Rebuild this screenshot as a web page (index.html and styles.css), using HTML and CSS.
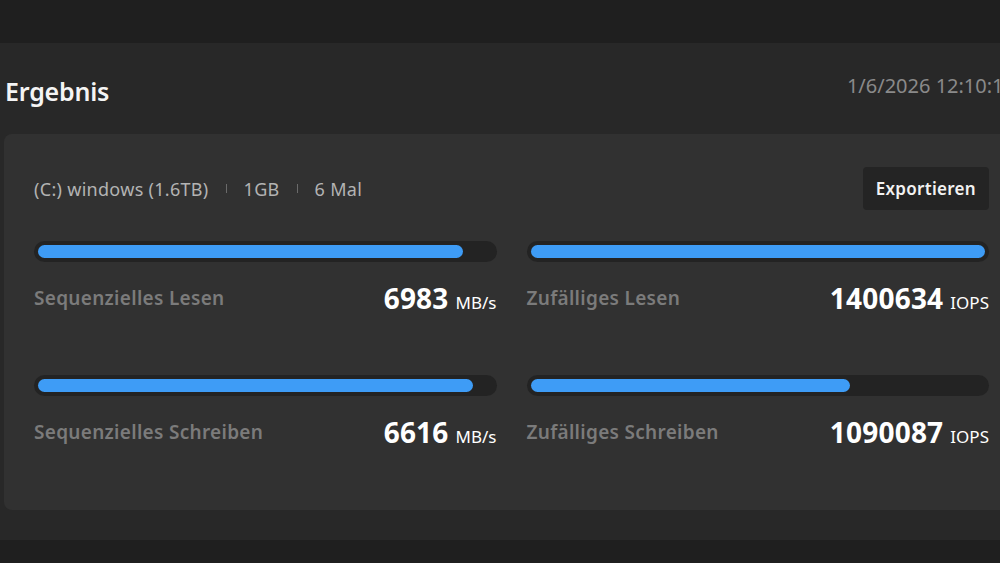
FILE: index.html
```html
<!DOCTYPE html>
<html lang="de">
<head>
<meta charset="utf-8">
<title>Ergebnis</title>
<link rel="stylesheet" href="styles.css">
</head>
<body>
<div class="topbar"></div>
<section class="panel">
  <header class="header">
    <h1 class="title">Ergebnis</h1>
    <div class="date">1/6/2026 12:10:15</div>
  </header>
  <div class="card">
    <div class="card-top">
      <div class="meta">
        <span>(C:) windows (1.6TB)</span>
        <span class="sep"></span>
        <span>1GB</span>
        <span class="sep"></span>
        <span>6 Mal</span>
      </div>
      <button class="export">Exportieren</button>
    </div>
    <div class="grid">
      <div class="item">
        <div class="track"><div class="fill" style="width:93.6%"></div></div>
        <div class="row"><span class="label">Sequenzielles Lesen</span><span class="value">6983<span class="unit">MB/s</span></span></div>
      </div>
      <div class="item">
        <div class="track"><div class="fill" style="width:100%"></div></div>
        <div class="row"><span class="label">Zufälliges Lesen</span><span class="value">1400634<span class="unit">IOPS</span></span></div>
      </div>
      <div class="item">
        <div class="track"><div class="fill" style="width:95.8%"></div></div>
        <div class="row"><span class="label">Sequenzielles Schreiben</span><span class="value">6616<span class="unit">MB/s</span></span></div>
      </div>
      <div class="item">
        <div class="track"><div class="fill" style="width:70.3%"></div></div>
        <div class="row"><span class="label">Zufälliges Schreiben</span><span class="value">1090087<span class="unit">IOPS</span></span></div>
      </div>
    </div>
  </div>
</section>
</body>
</html>
```
FILE: styles.css
```css
html, body {
  margin: 0;
  padding: 0;
}
body {
  width: 1000px;
  height: 563px;
  overflow: hidden;
  background: #1f1f1f;
  font-family: "Noto Sans", "Open Sans", sans-serif;
  color: #fff;
}
.topbar {
  height: 43px;
  background: #1f1f1f;
}
.panel {
  width: 1040px;
  height: 497px;
  background: #282828;
  padding-left: 4px;
  box-sizing: border-box;
}
.header {
  width: 1019px;
  height: 91px;
  display: flex;
  align-items: center;
  justify-content: space-between;
  padding-left: 1px;
  padding-right: 8px;
  box-sizing: border-box;
}
.title {
  margin: 0;
  font-size: 25px;
  font-weight: 600;
  letter-spacing: -0.2px;
  color: #f4f4f4;
  position: relative;
  top: 2px;
}
.date {
  font-size: 20px;
  color: #8a8a8a;
  position: relative;
  top: -3px;
}
.card {
  width: 1019px;
  height: 376px;
  background: #313131;
  border-radius: 8px;
  padding: 33px 34px 0 30px;
  box-sizing: border-box;
}
.card-top {
  display: flex;
  align-items: center;
  justify-content: space-between;
  height: 43px;
}
.meta {
  display: flex;
  align-items: center;
  gap: 17px;
  font-size: 18px;
  letter-spacing: 0.3px;
  color: #b3b3b3;
}
.sep {
  width: 1px;
  height: 9px;
  background: #6a6a6a;
}
.export {
  height: 43px;
  padding: 0 13px;
  background: #242424;
  border: none;
  border-radius: 4px;
  color: #f2f2f2;
  font-family: inherit;
  font-size: 17px;
  font-weight: 600;
  letter-spacing: 0.3px;
}
.grid {
  margin-top: 31px;
  display: grid;
  grid-template-columns: 1fr 1fr;
  column-gap: 30px;
  row-gap: 59px;
}
.track {
  height: 21px;
  background: #232323;
  border-radius: 11px;
  padding: 4px;
  box-sizing: border-box;
}
.fill {
  height: 13px;
  background: #3e9cf6;
  border-radius: 7px;
}
.row {
  margin-top: 18px;
  height: 36px;
  display: flex;
  align-items: center;
  justify-content: space-between;
}
.label {
  font-size: 19px;
  font-weight: 600;
  letter-spacing: 0.3px;
  color: #7b7b7b;
}
.value {
  font-size: 28px;
  font-weight: 700;
  color: #fff;
  letter-spacing: 0.2px;
}
.unit {
  font-size: 17px;
  font-weight: 400;
  margin-left: 7px;
  letter-spacing: 0;
}
```
